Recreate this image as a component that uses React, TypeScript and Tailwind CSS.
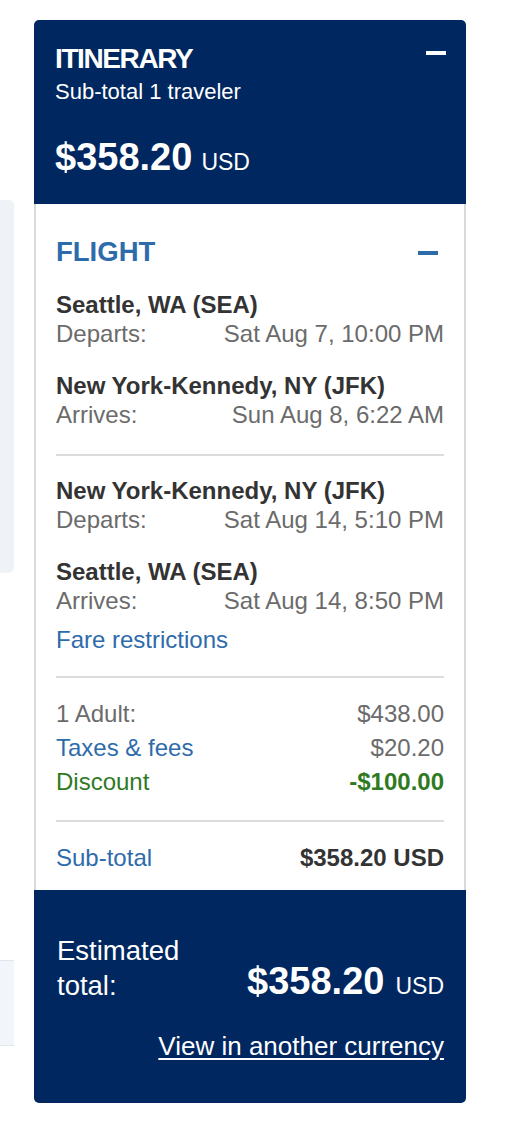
const font = { fontFamily: '"Liberation Sans", Arial, sans-serif' };

type Leg = { city: string; label: string; time: string };

const outbound: Leg[] = [
  { city: "Seattle, WA (SEA)", label: "Departs:", time: "Sat Aug 7, 10:00 PM" },
  { city: "New York-Kennedy, NY (JFK)", label: "Arrives:", time: "Sun Aug 8, 6:22 AM" },
];

const inbound: Leg[] = [
  { city: "New York-Kennedy, NY (JFK)", label: "Departs:", time: "Sat Aug 14, 5:10 PM" },
  { city: "Seattle, WA (SEA)", label: "Arrives:", time: "Sat Aug 14, 8:50 PM" },
];

function LegBlock({ leg, first }: { leg: Leg; first?: boolean }) {
  return (
    <div className={first ? "" : "mt-[23px]"}>
      <div className="font-bold text-[#333333]">{leg.city}</div>
      <div className="flex justify-between text-[#6b6b6b]">
        <span>{leg.label}</span>
        <span>{leg.time}</span>
      </div>
    </div>
  );
}

export default function App() {
  return (
    <div className="flex min-h-[1134px] bg-white pt-5" style={font}>
      {/* left page column edge */}
      <div className="w-[14px] shrink-0">
        <div className="mt-[180px] h-[373px] rounded-r-[5px] bg-[#eff3f7]" />
        <div className="mt-[387px] h-[86px] border-y border-[#dfe6ee] bg-[#f2f5f9]" />
      </div>

      {/* Itinerary card */}
      <div className="ml-5 w-[432px] shrink-0">
        {/* Header */}
        <div className="rounded-t-[5px] bg-[#00275f] pl-[21px] pr-5 pt-[23px] pb-[25px] text-white">
          <div className="flex items-start justify-between">
            <h2 className="text-[28px] font-bold leading-[32px] tracking-[-1.4px]">ITINERARY</h2>
            <div className="mt-[8px] h-[4px] w-5 bg-white" />
          </div>
          <p className="mt-[3px] text-[22px] leading-[28px]">Sub-total 1 traveler</p>
          <div className="mt-[29px] flex items-baseline">
            <span className="text-[38px] font-bold leading-[44px]">$358.20</span>
            <span className="ml-[9px] text-[23px] leading-[28px]">USD</span>
          </div>
        </div>

        {/* Body */}
        <div className="border-x-2 border-[#d9d9d9] bg-white px-5 pt-[32px] pb-[18px] text-[24px] leading-[29px]">
          <div className="flex items-center justify-between">
            <h3 className="text-[27.5px] font-bold leading-[32px] text-[#2e6bab]">FLIGHT</h3>
            <div className="mr-[6px] mt-[1px] h-[4px] w-5 bg-[#2e6bab]" />
          </div>

          <div className="mt-[22px]">
            {outbound.map((leg, i) => (
              <LegBlock key={leg.city} leg={leg} first={i === 0} />
            ))}
          </div>

          <div className="mt-[25px] h-[2px] bg-[#dcdcdc]" />

          <div className="mt-[20px]">
            {inbound.map((leg, i) => (
              <LegBlock key={leg.city} leg={leg} first={i === 0} />
            ))}
          </div>

          <a className="mt-[10px] block text-[#2e6bab]">Fare restrictions</a>

          <div className="mt-[22px] h-[2px] bg-[#dcdcdc]" />

          <div className="mt-[19px] leading-[34px]">
            <div className="flex justify-between text-[#6b6b6b]">
              <span>1 Adult:</span>
              <span>$438.00</span>
            </div>
            <div className="flex justify-between">
              <a className="text-[#2e6bab]">Taxes &amp; fees</a>
              <span className="text-[#6b6b6b]">$20.20</span>
            </div>
            <div className="flex justify-between text-[#2f7a1f]">
              <span>Discount</span>
              <span className="font-bold">-$100.00</span>
            </div>
          </div>

          <div className="mt-[21px] h-[2px] bg-[#dcdcdc]" />

          <div className="mt-[21px] flex justify-between">
            <a className="text-[#2e6bab]">Sub-total</a>
            <span className="font-bold text-[#333333]">$358.20 USD</span>
          </div>
        </div>

        {/* Footer */}
        <div className="rounded-b-[5px] bg-[#00275f] pl-[23px] pr-[22px] pt-[43px] pb-[41px] text-white">
          <div className="flex items-end justify-between">
            <p className="w-[140px] text-[27.5px] leading-[35px]">Estimated total:</p>
            <div className="flex items-baseline">
              <span className="text-[38px] font-bold leading-[44px]">$358.20</span>
              <span className="ml-[11px] text-[23px] leading-[28px]">USD</span>
            </div>
          </div>
          <div className="mt-[28px] text-right">
            <a className="text-[26px] leading-[30px] underline underline-offset-[3px]">
              View in another currency
            </a>
          </div>
        </div>
      </div>
    </div>
  );
}
